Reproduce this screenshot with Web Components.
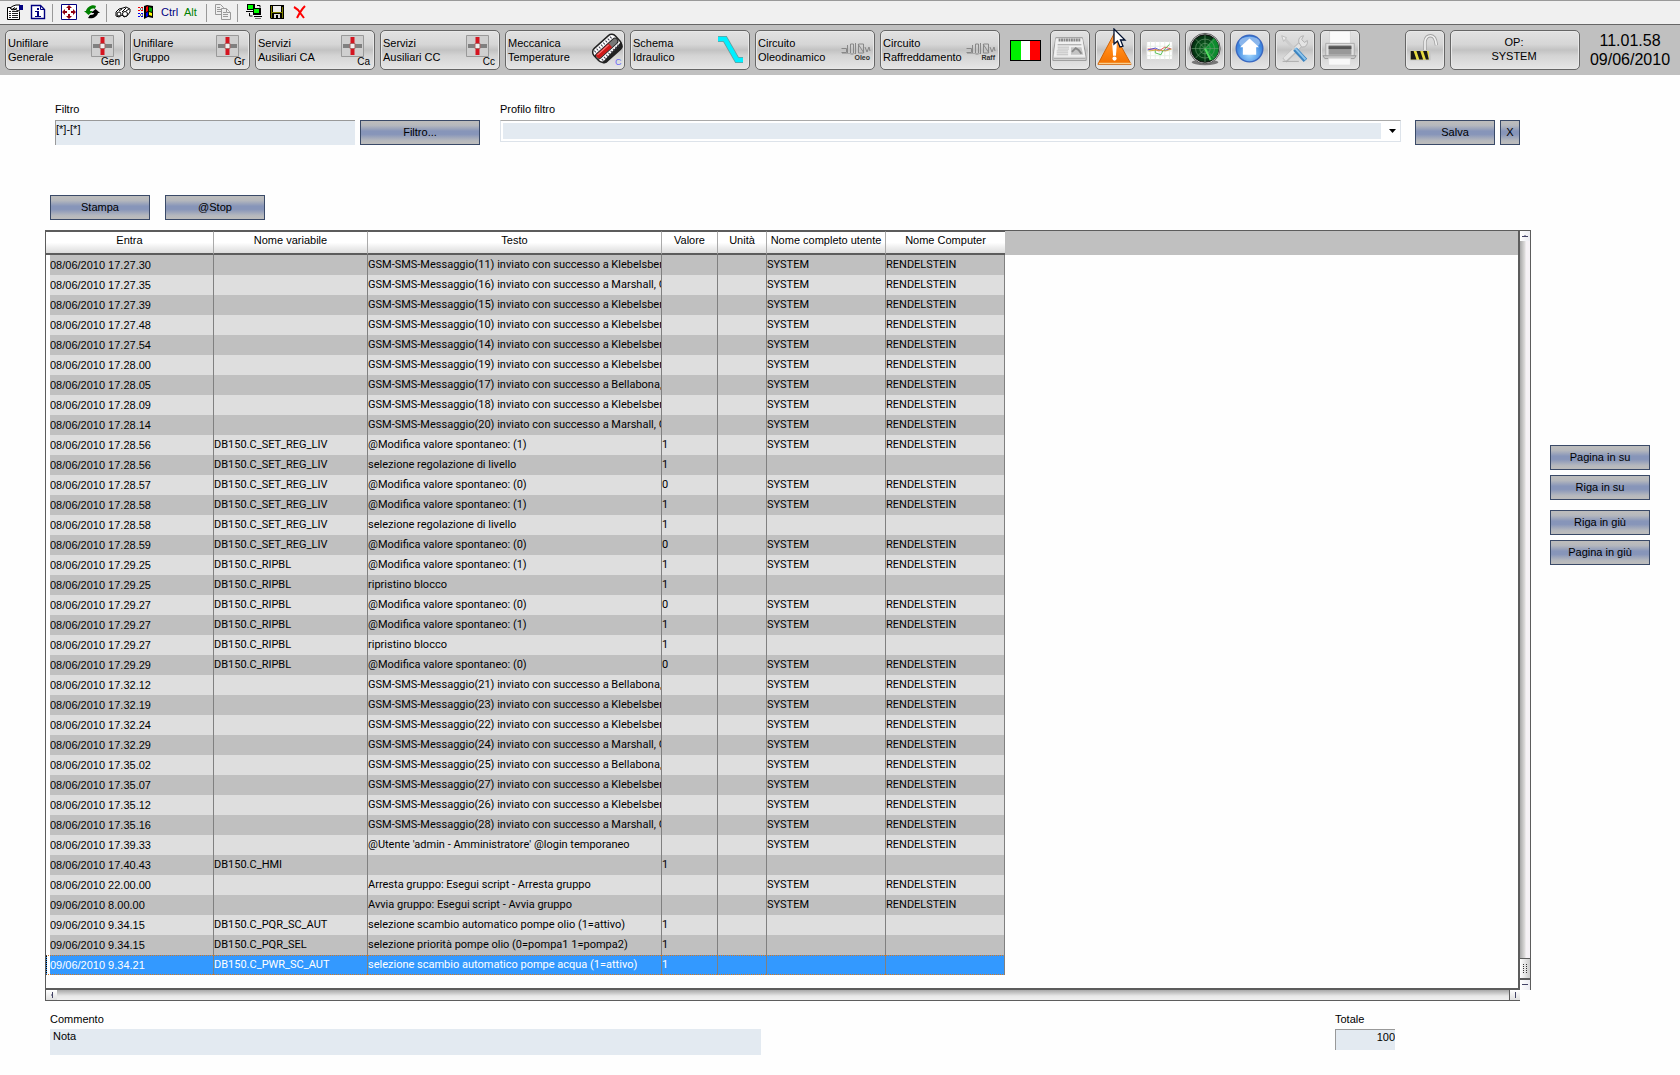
<!DOCTYPE html>
<html lang="it">
<head>
<meta charset="utf-8">
<title>Lista eventi</title>
<style>
  body { margin: 0; background: #fefefe; color: #000; font: 11px/14px "Liberation Sans", Arial, sans-serif; }
</style>
</head>
<body>
<hmi-app></hmi-app>

<script>
const NS_ICONS = {
  properties: ['0 0 16 16', '<path d="M3.500 3.500h-3v12h12v-8M3 3.500h3M0 6.500h3" fill="none" stroke="#000"/><path d="M1 5h11v10H1z" fill="#fff"/><path d="M2 7.500h2m1 0h6M2 9.500h2m1 0h6M2 11.500h2m1 0h6M2 13.500h2m1 0h6M4 5.500h6" stroke="#222"/><path d="M3 4l3-2 3-1 4 0v5l-2 1-3-2-2 1z" fill="#fff" stroke="#000"/><path d="M12 1h4v5h-4z" fill="#000080"/><path d="M5 5.500l3-2M7 6l3-2" stroke="#000"/>'],
  info: ['0 0 16 16', '<path d="M1.500 1.500h9l4 4v9h-13z" fill="#fff" stroke="#000080" stroke-width="1.400"/><path d="M10.500 1.500v4h4" fill="none" stroke="#000080"/><path d="M7 4h2v2H7zM5 7h4v5h2v1H5v-1h2V8H5z" fill="#000080"/>'],
  expand: ['0 0 16 16', '<path d="M.5 .5h15v15H.5z" fill="#fff" stroke="#000080"/><path d="M8 1l3 3H9v2H7V4H5zM8 15l3-3H9v-2H7v2H5zM1 8l3-3v2h2v2H4v2zM15 8l-3-3v2h-2v2h2v2z" fill="#900010"/>'],
  refresh: ['0 0 16 16', '<path d="M0 7h2C3 3 8 0 12 2l-1 3C8 4 6 5 6 7h3l-4.500 4z" fill="#008000"/><path d="M16 9h-2c-1 4-5 6-10 5l2-3c3 0 4-1 4-2H7l4.500-4z" fill="#000"/>'],
  find: ['0 0 16 16', '<path d="M1 8l3-3 4-1 3-1 4 2v3l-3 4-3 1-2-2-3 2-3-1z" fill="#fff" stroke="#000"/><circle cx="4" cy="10" r="2" fill="#fff" stroke="#000"/><circle cx="10" cy="10" r="2.500" fill="#fff" stroke="#000"/><path d="M4 7l3-2M7 8l4-4M11 7l3-2" stroke="#000"/>'],
  windows: ['0 0 16 16', '<path d="M6 2l3-1 6 1v12l-5-1-4 2z" fill="#000"/><path d="M8 3l2-1v5l-2 1z" fill="#f00"/><path d="M11 3l3 1v4l-3-1z" fill="#0a0"/><path d="M8 9l2-1v4l-2 1z" fill="#00f"/><path d="M11 8l3 1v3l-3-1z" fill="#ff0"/><path d="M0 3.500h5M0 6.500h5" stroke="#e00" stroke-dasharray="2 1"/><path d="M0 9.500h5M0 12.500h5" stroke="#00e" stroke-dasharray="2 1"/><path d="M2 5h3M2 11h3" stroke="#000" stroke-dasharray="1 1"/>'],
  copy: ['0 0 16 16', '<g fill="#eee" stroke="#999"><path d="M.5 .5h5l3 3v7h-8z"/><path d="M6.500 4.500h5l4 4v7h-9z"/><path d="M2 3.500h3M2 5.500h4M2 7.500h4M8 8.500h3M8 10.500h5M8 12.500h5M11.500 5v3.500h4"/></g>'],
  network: ['0 0 16 16', '<path d="M1 0h8v6H1z" fill="#000"/><path d="M2 1h5v4H2z" fill="#0f0"/><path d="M0 7.500h8" stroke="#000"/><path d="M7 4h8v7H7z" fill="#000"/><path d="M8 5h5v4H8z" fill="#0f0"/><path d="M8 12.500h8M11 1.500h3v2M3.500 9v3h3" stroke="#000" fill="none"/><path d="M9 14.500h6" stroke="#777"/>'],
  save: ['0 0 16 16', '<path d="M1 1h14v14H2l-1-1z" fill="#000"/><path d="M2 2h1v12H2zM13 3h1v11h-1z" fill="#808000"/><path d="M3 8h10v1H3z" fill="#808000"/><path d="M4 2h8v6H4z" fill="#eee"/><path d="M5 10h6v4H9v-3H7v3H5z" fill="#ddd"/>'],
  remove: ['0 0 16 16', '<path d="M2 3q4 2 7 7l3 4M13 2Q9 6 5 14" fill="none" stroke="#f00" stroke-width="2"/>'],

  temperature: ['0 0 32 36', '<g transform="rotate(-42 16 17)"><rect x="2" y="8" width="29" height="17" rx="5" fill="#fff" stroke="#222" stroke-width="1.500"/><path d="M3 24q2 4 6 3h17q5 0 5-6" fill="#222"/><path d="M5 11h23M5 22h23" stroke="#445" stroke-width="2.500" stroke-dasharray="1 2"/><rect x="2" y="13.500" width="28" height="6" rx="3" fill="#777" stroke="#222"/><path d="M4 14h17v5H4q-2-2.500 0-5z" fill="#d01818"/><path d="M5 15h15" stroke="#ff8080"/></g><text x="24" y="33" font-size="9" fill="#6868f8">C</text>'],
  pipe: ['0 0 32 36', '<path d="M2 7h7l12 21h6" fill="none" stroke="#6a9a9a" stroke-width="6"/><path d="M2 7h7l12 21h6" fill="none" stroke="#00f0ff" stroke-width="4.500"/>'],
  alert: ['0 0 40 40', '<defs><linearGradient id="a" x2="0" y2="1"><stop stop-color="#ffa050"/><stop offset=".6" stop-color="#ff8410"/><stop offset="1" stop-color="#f07000"/></linearGradient></defs><path d="M19 3L37 35H2z" fill="url(#a)" stroke="#d06000" stroke-linejoin="round"/><path d="M3 34h34" stroke="#fff0c0"/><path d="M17 13h5l-1 13h-3z" fill="#fff"/><circle cx="19.500" cy="29" r="2.200" fill="#fff"/>'],
  news: ['0 0 40 40', '<path d="M5 7l28 0 4 20v4H2v-4z" fill="#d4d4d4" stroke="#999"/><path d="M5 8h28l3 19H3z" fill="#f0f0f0"/><path d="M8 9.500h23" stroke="#888" stroke-width="3" stroke-dasharray="2 .6"/><path d="M7 14.500h25" stroke="#999"/><path d="M7 17h12M7 19h12M6 21h12M6 23h12M6 25h12" stroke="#bbb"/><path d="M21 17h11l2 8H21z" fill="#c4c4c4"/><path d="M22 22l4-4 3 2 3 4" fill="none" stroke="#888" stroke-width="2"/><path d="M3 29h33" stroke="#aaa"/>'],
  trend: ['0 0 40 40', '<path d="M6 11h27v19H6z" fill="#fff" stroke="#d8d8d8"/><path d="M10 11v19M15 11v19M20 11v19M25 11v19M30 11v19M6 16h27M6 21h27M6 26h27" stroke="#e6eee6"/><path d="M7 19l7 0 5 2 6-4 7 2" fill="none" stroke="#e05050"/><path d="M7 20l8-2 7 3 9-2" fill="none" stroke="#5050d0"/><path d="M15 20l0 3 6 2 2-4 7-7" fill="none" stroke="#50c050"/><path d="M8 21l9-1 9 1 6-2" fill="none" stroke="#d0b040"/>'],
  radar: ['0 0 40 40', '<defs><radialGradient id="r"><stop stop-color="#0a6a20"/><stop offset="1" stop-color="#042c10"/></radialGradient></defs><ellipse cx="20" cy="33" rx="14" ry="3" fill="#777"/><circle cx="20" cy="18.500" r="16" fill="#d8d8d8" stroke="#555"/><circle cx="20" cy="18.500" r="14.500" fill="url(#r)" stroke="#111"/><path d="M20 18.500L29 7A14.500 14.500 0 0 1 27 31z" fill="#10a838" opacity=".75"/><g fill="none" stroke="#6a9a70" stroke-width=".7"><circle cx="20" cy="18.500" r="10"/><circle cx="20" cy="18.500" r="5.500"/><path d="M20 4v29M6 18.500h28M10 8.500l20 20M30 8.500l-20 20"/></g><path d="M20 18.500l6 12" stroke="#50e060" stroke-width="2"/>'],
  home: ['0 0 40 40', '<defs><radialGradient id="h" cy=".7"><stop stop-color="#a8dcff"/><stop offset="1" stop-color="#3c86e0"/></radialGradient></defs><circle cx="19.500" cy="18.500" r="14" fill="url(#h)" stroke="#3a68c0" stroke-width="1.500"/><ellipse cx="19.500" cy="12" rx="11" ry="6" fill="#fff" opacity=".4"/><path d="M19.500 8l10 9h-3v8h-14v-8h-3z" fill="#fff"/>'],
  tools: ['0 0 40 40', '<path d="M9 31l18-18" stroke="#b8b8b8" stroke-width="6"/><path d="M9 30l18-17" stroke="#e4e4e4" stroke-width="4"/><path d="M24 12q-1-6 5-7l-2 4 3 3 3-2q1 7-6 7z" fill="#e4e4e4" stroke="#b0b0b0"/><path d="M8 7l13 14" stroke="#ccc" stroke-width="3"/><path d="M6 5l5 2-3 4z" fill="#eee" stroke="#bbb"/><path d="M20 19l11 12" stroke="#3c84c0" stroke-width="5"/><path d="M20 18l11 12" stroke="#8cc4ec" stroke-width="2"/><path d="M7 32h17" stroke="#aaa"/>'],
  printer: ['0 0 40 40', '<path d="M9 0h22v16H9z" fill="#fafafa" stroke="#d4d4d4"/><path d="M5 13h30v14H5z" fill="#e0e0e0" stroke="#aaa"/><path d="M8 15h24v10H8z" fill="#999"/><path d="M8 16h24v3H8z" fill="#555"/><path d="M2 26h35l-2 3H4z" fill="#c8c8c8" stroke="#999"/><path d="M8 29h23v7H8z" fill="#f8f8f8" stroke="#ddd"/>'],
  unlocked: ['0 0 40 40', '<path d="M20 20V11q1-6 6-6t6 10" fill="none" stroke="#a0a0a0" stroke-width="3.500"/><path d="M20 20V11q1-6 6-6t6 10" fill="none" stroke="#f0f0f0" stroke-width="1.800"/><rect x="4" y="20" width="22" height="11" rx="1" fill="#c8c8c8"/><rect x="5" y="21" width="19" height="9" fill="#e8dc40"/><path d="M5 21h3l3 9H5zM11 21h4l3 9h-4zM18 21h4l2 9h-3z" fill="#181818"/>'],
  pointer: ['0 0 14 20', '<path d="M1 1v15l3.500-3 2.500 6 3-1-2.500-6H12z" fill="#fff" stroke="#001030" stroke-width="1.300"/>']
};
const breakerIcon = label => ['0 0 32 36', `<path d="M.5 3.500h22v21H.5z" fill="#cfcfcf" stroke="#999"/><path d="M2 14h19" stroke="#808080" stroke-width="4"/><path d="M11.500 5v18" stroke="#d41420" stroke-width="4"/><path d="M9 11.500h5v5H9z" fill="#eee" stroke="#a66"/><text x="29" y="33" font-size="10" text-anchor="end">${label}</text>`];
const pumpIcon = label => ['0 0 32 36', `<g fill="none" stroke="#888"><path d="M.5 16.500h5v4h-5M6.500 13v9M9.500 12v10h3V12zM14.500 11v11M17.500 12v9h5v-9zM17 12l6 9M24 15l2 5 2-5 1 4"/><path d="M1 21.500h13" stroke="#aaa"/></g><text x="29" y="28" font-size="7" font-weight="bold" text-anchor="end" fill="#333">${label}</text>`];
for (const n of ['Gen', 'Gr', 'Ca', 'Cc']) NS_ICONS[n] = breakerIcon(n);
for (const n of ['Oleo', 'Raff']) NS_ICONS[n] = pumpIcon(n);

/* Base class: renders the subclass's css and html into an open shadow root. */
class HmiElement extends HTMLElement {
  connectedCallback() {
    if (this.shadowRoot) return;
    const t = document.createElement('template');
    t.innerHTML = `<style>*{box-sizing:border-box}button,input,select,textarea{font:inherit;color:inherit;margin:0;border-radius:0}${this.css()}</style>${this.html()}`;
    this.attachShadow({ mode: 'open' }).append(t.content.cloneNode(true));
  }
  attr(n, d = '') { return this.getAttribute(n) ?? d; }
}

class HmiIcon extends HmiElement {
  css() { return ':host{display:block;flex:none}svg{display:block;width:100%;height:100%;font-family:"Liberation Sans",Arial,sans-serif}'; }
  html() { const [box, body] = NS_ICONS[this.attr('name')]; return `<svg viewBox="${box}" aria-hidden="true">${body}</svg>`; }
}
customElements.define('hmi-icon', HmiIcon);

class HmiButton extends HmiElement {
  css() { return `:host{display:block;width:100px;height:25px}
    button{display:block;width:100%;height:100%;padding:0 0 2px;border:1px solid #3a4a68;
    background:linear-gradient(#bcbcbc 5%,#b4b7bd 20%,#8795b9 44%,#8795b9 58%,#b4b7bd 84%,#bcbcbc 95%);text-align:center}`; }
  html() { return '<button type="button"><slot></slot></button>'; }
}
customElements.define('hmi-button', HmiButton);

const METAL = 'border:1px solid #666;border-radius:5px;background:linear-gradient(#e2e2e2,#d6d6d6 35%,#c2c2c2 50%,#d4d4d4 65%,#e6e6e6);box-shadow:inset 0 0 0 1px #e8e8e8;';

class HmiNavButton extends HmiElement {
  css() { return `:host{display:block;width:120px;height:40px}
    button{${METAL}display:flex;justify-content:space-between;align-items:center;width:100%;height:100%;padding:0 1px 0 2px;text-align:left;line-height:14px}
    span{white-space:pre-line;flex:1;width:0}hmi-icon{width:32px;height:36px}`; }
  html() { return `<button type="button"><span>${this.attr('label').replace('|', '\n')}</span><hmi-icon name="${this.attr('icon')}"></hmi-icon></button>`; }
}
customElements.define('hmi-nav-button', HmiNavButton);

class HmiIconButton extends HmiElement {
  css() { return `:host{display:block;width:40px;height:40px;position:relative}
    button{${METAL}display:block;width:100%;height:100%;padding:0}
    hmi-icon{width:38px;height:38px}`; }
  html() { return `<button type="button" aria-label="${this.attr('label')}"><hmi-icon name="${this.attr('icon')}"></hmi-icon></button><slot></slot>`; }
}
customElements.define('hmi-icon-button', HmiIconButton);

class HmiToolbar extends HmiElement {
  css() { return `:host{display:flex;align-items:center;height:25px;padding-left:3px;background:#f0f0f0;border-top:1px solid #999;border-bottom:1px solid #666}
    button{display:block;width:23px;height:22px;padding:0 3px 1px 4px;border:0;background:none;white-space:nowrap}
    button.t{text-align:left;padding-right:0}
    hmi-icon{width:16px;height:16px}
    i{width:1px;height:18px;margin:0 4px 0 3px;background:#999}
    .c{color:#000080}.a{color:#008000}`; }
  html() {
    const b = (n, l) => `<button type="button" aria-label="${l}"><hmi-icon name="${n}"></hmi-icon></button>`;
    return b('properties', 'Proprietà') + b('info', 'Info') + '<i></i>' + b('expand', 'Espandi') + b('refresh', 'Aggiorna') + '<i></i>' +
      b('find', 'Cerca') + b('windows', 'Windows') + '<button type="button" class="t c">Ctrl</button><button type="button" class="t a">Alt</button><i></i>' +
      b('copy', 'Copia') + '<i></i>' + b('network', 'Rete') + b('save', 'Salva') + b('remove', 'Elimina');
  }
}
customElements.define('hmi-toolbar', HmiToolbar);

class HmiNavBar extends HmiElement {
  css() { return `:host{display:flex;align-items:center;gap:5px;height:50px;padding:0 5px;background:#c0c0c0}
    .flag{flex:none;width:31px;height:21px;margin:0 4px 0 5px;padding:0;border:1px solid #000;background:linear-gradient(90deg,#00f000 33%,#fff 33% 66%,#f00 66%)}
    .sp{flex:1}
    .op{${METAL}width:130px;height:40px;padding:0 2px 2px 0;line-height:14px}
    time{width:90px;text-align:center;font-size:16px;line-height:19px}
    .cur{position:absolute;left:18px;top:-2px;width:14px;height:20px}`; }
  html() {
    const nav = [['Unifilare|Generale', 'Gen'], ['Unifilare|Gruppo', 'Gr'], ['Servizi|Ausiliari CA', 'Ca'], ['Servizi|Ausiliari CC', 'Cc'], ['Meccanica|Temperature', 'temperature'], ['Schema|Idraulico', 'pipe'], ['Circuito|Oleodinamico', 'Oleo'], ['Circuito|Raffreddamento', 'Raff']]
      .map(([l, i]) => `<hmi-nav-button label="${l}" icon="${i}"></hmi-nav-button>`).join('');
    const ic = [['news', 'Notizie'], ['alert', 'Allarmi'], ['trend', 'Trend'], ['radar', 'Radar'], ['home', 'Home'], ['tools', 'Strumenti'], ['printer', 'Stampante']]
      .map(([i, l]) => `<hmi-icon-button icon="${i}" label="${l}">${i === 'alert' ? '<hmi-icon class="cur" name="pointer"></hmi-icon>' : ''}</hmi-icon-button>`).join('');
    return nav + '<button type="button" class="flag" aria-label="Italiano"></button>' + ic +
      '<span class="sp"></span><hmi-icon-button icon="unlocked" label="Accesso"></hmi-icon-button><button type="button" class="op">OP:<br>SYSTEM</button><time>11.01.58<br>09/06/2010</time>';
  }
}
customElements.define('hmi-nav-bar', HmiNavBar);

class HmiField extends HmiElement {
  css() { return `:host{display:flex;flex-direction:column;gap:3px}
    label{line-height:13px}
    input,textarea{display:block;width:100%;height:var(--h,25px);padding:0;border:0;background:#e3eaf1;resize:none;outline:0;overflow:hidden}
    .inset{border-top:1px solid #999;border-left:1px solid #999}
    .top{padding:0 0 9px}
    .num{text-align:right;padding-bottom:6px}
    textarea{padding:0 3px;line-height:14px}
    .sel{display:grid;align-items:center;border:1px solid #dde3ea;border-top-color:#aaa;height:22px;background:#fff;padding:2px 0 2px 2px}
    select{grid-area:1/1;appearance:none;width:100%;height:16px;border:0;padding:0;border-right:19px solid #fff;background:#e3eaf1;background-clip:padding-box}
    .sel svg{grid-area:1/1;justify-self:end;margin-right:4px;pointer-events:none}`; }
  html() {
    const k = this.attr('kind'), v = this.attr('value');
    const c = k === 'select' ? '<div class="sel"><select id="f"></select><svg width="7" height="4"><path d="M0 0h7L3.500 4z"/></svg></div>'
      : k === 'note' ? `<textarea id="f">${v}</textarea>`
      : `<input id="f" type="text" class="inset ${k}" value="${v}">`;
    return `<label for="f">${this.attr('label')}</label>${c}`;
  }
}
customElements.define('hmi-field', HmiField);

const SMS = (t, n, who) => [t, '', `GSM-SMS-Messaggio(${n}) inviato con successo a ${who}`, '', '', 'SYSTEM', 'RENDELSTEIN'];
const MOD = (t, v, n) => [t, v, `@Modifica valore spontaneo: (${n})`, n, '', 'SYSTEM', 'RENDELSTEIN'];
const ACT = (t, v, x) => [t, v, x, '1', '', '', ''];
const K = 'Klebelsber', M = 'Marshall, G', B = 'Bellabona,', D = '08/06/2010 ', L = 'DB150.C_SET_REG_LIV', R = 'DB150.C_RIPBL';
const EVENTS = [
  SMS(D + '17.27.30', 11, K), SMS(D + '17.27.35', 16, M), SMS(D + '17.27.39', 15, K), SMS(D + '17.27.48', 10, K),
  SMS(D + '17.27.54', 14, K), SMS(D + '17.28.00', 19, K), SMS(D + '17.28.05', 17, B), SMS(D + '17.28.09', 18, K), SMS(D + '17.28.14', 20, M),
  MOD(D + '17.28.56', L, 1), ACT(D + '17.28.56', L, 'selezione regolazione di livello'),
  MOD(D + '17.28.57', L, 0), MOD(D + '17.28.58', L, 1), ACT(D + '17.28.58', L, 'selezione regolazione di livello'), MOD(D + '17.28.59', L, 0),
  MOD(D + '17.29.25', R, 1), ACT(D + '17.29.25', R, 'ripristino blocco'), MOD(D + '17.29.27', R, 0), MOD(D + '17.29.27', R, 1),
  ACT(D + '17.29.27', R, 'ripristino blocco'), MOD(D + '17.29.29', R, 0),
  SMS(D + '17.32.12', 21, B), SMS(D + '17.32.19', 23, K), SMS(D + '17.32.24', 22, K), SMS(D + '17.32.29', 24, M),
  SMS(D + '17.35.02', 25, B), SMS(D + '17.35.07', 27, K), SMS(D + '17.35.12', 26, K), SMS(D + '17.35.16', 28, M),
  [D + '17.39.33', '', "@Utente 'admin - Amministratore' @login temporaneo", '', '', 'SYSTEM', 'RENDELSTEIN'],
  [D + '17.40.43', 'DB150.C_HMI', '', '1', '', '', ''],
  [D + '22.00.00', '', 'Arresta gruppo: Esegui script - Arresta gruppo', '', '', 'SYSTEM', 'RENDELSTEIN'],
  ['09/06/2010 8.00.00', '', 'Avvia gruppo: Esegui script - Avvia gruppo', '', '', 'SYSTEM', 'RENDELSTEIN'],
  ACT('09/06/2010 9.34.15', 'DB150.C_PQR_SC_AUT', 'selezione scambio automatico pompe olio (1=attivo)'),
  ACT('09/06/2010 9.34.15', 'DB150.C_PQR_SEL', 'selezione priorità pompe olio (0=pompa1 1=pompa2)'),
  ACT('09/06/2010 9.34.21', 'DB150.C_PWR_SC_AUT', 'selezione scambio automatico pompe acqua (1=attivo)')
];

class HmiEventTable extends HmiElement {
  css() { return `:host{display:grid;grid-template-columns:1fr 11px;grid-template-rows:1fr 11px}
    .frame{border:solid #5c5c5c;border-width:1px 2px 2px 1px;padding-bottom:13px;background:linear-gradient(#c0c0c0 24px,#fefefe 24px)}
    table{table-layout:fixed;width:959px;border-collapse:separate;border-spacing:0}
    th,td{padding:0;overflow:hidden;white-space:nowrap;text-align:left;font-weight:normal}
    th{height:24px;padding:0 0 5px;text-align:center;border-top:1px solid #5c5c5c;border-bottom:2px solid #5c5c5c;border-left:1px solid #aaa;background:linear-gradient(#fff 50%,#dcdcdc)}
    th:first-child{border-left:0}
    td{height:20px;line-height:18px;border-left:1px solid #808080;background:#c0c0c0}
    tr:nth-child(even) td{background:#dedede}
    td:first-child{border-left:4px solid #fefefe}
    td:nth-child(n+2){font-family:Roboto,sans-serif}
    td:last-child{border-right:1px solid #808080}
    tr.on td{color:#fff;background:#3399ff;border-top:1px dotted #d87820;border-bottom:1px dotted #d87820;line-height:16px}
    tr.on td:first-child{border-left:1px dotted #000;padding-left:3px;background:linear-gradient(90deg,#fefefe 3px,#3399ff 3px)}
    .v{display:flex;flex-direction:column;border-top:1px solid #5c5c5c;border-right:1px solid #5c5c5c;background:linear-gradient(90deg,#a8a8a8,#e0dede 50%,#f6f2f6 60%)}
    .h{display:flex;border-left:1px solid #5c5c5c;border-bottom:1px solid #5c5c5c;background:linear-gradient(#a8a8a8,#e8e8e8 60%,#f0f0f0)}
    .g{flex:1}
    button{display:grid;place-items:center;flex:none;width:10px;height:10px;padding:0;border:0;background:linear-gradient(90deg,#fff,#ececf2)}
    .h button{width:11px;background:linear-gradient(#fff,#e0e0e0)}
    .h .e{border-left:1px solid #5c5c5c}
    .v .th{height:22px;border-top:1px solid #5c5c5c;border-bottom:2px solid #5c5c5c;background:linear-gradient(90deg,#fff,#ccc)}
    svg{display:block}`; }
  html() {
    const heads = [['Entra', 167], ['Nome variabile', 154], ['Testo', 294], ['Valore', 56], ['Unità', 49], ['Nome completo utente', 119], ['Nome Computer', 120]];
    const tick = (n, d) => `<button type="button" aria-label="${n}"><svg width="6" height="6"><path d="${d}" stroke="#446" fill="none"/></svg></button>`;
    return `<div class="frame"><table><colgroup>${heads.map(h => `<col style="width:${h[1]}px">`).join('')}</colgroup>
      <thead><tr>${heads.map(h => `<th>${h[0]}</th>`).join('')}</tr></thead>
      <tbody>${EVENTS.map((e, i) => `<tr${i === EVENTS.length - 1 ? ' class="on"' : ''}>${e.map(c => `<td>${c}</td>`).join('')}</tr>`).join('')}</tbody></table></div>
      <div class="v">${tick('Su', 'M0 3.500h6M3 2v1')}<div class="g"></div><button type="button" class="th" aria-label="Cursore"><svg width="6" height="10"><path d="M1.500 0v10M4.500 0v10" stroke="#333" stroke-dasharray="1 1"/></svg></button>${tick('Giù', 'M0 2.500h6')}</div>
      <div class="h">${tick('Sinistra', 'M3.500 0v6M2 3h1')}<div class="g"></div>${tick('Destra', 'M3.500 0v6').replace('<button', '<button class="e"')}</div>`;
  }
}
customElements.define('hmi-event-table', HmiEventTable);

class HmiApp extends HmiElement {
  css() { return `:host{display:block}
    .filter{display:flex;align-items:flex-start;padding:28px 160px 0 55px}
    .filter hmi-button{margin-top:17px}
    .filter hmi-field{gap:4px}
    .f1{width:300px;margin-right:5px}
    .b1{width:120px;margin-right:20px}
    .f2{flex:1;margin-right:14px}
    .b2{width:80px;margin-right:5px}.b3{width:20px}
    .acts{display:flex;gap:15px;padding:50px 50px 10px}
    .body{display:flex;align-items:center;gap:19px;padding:0 30px 0 45px}
    hmi-event-table{flex:1}
    .side{display:flex;flex-direction:column;gap:5px;padding-bottom:221px}
    .side hmi-button:nth-child(3){margin-top:5px}
    .foot{display:flex;justify-content:space-between;align-items:flex-start;padding:12px 285px 16px 50px}
    .note{width:711px;--h:26px}.tot{width:60px;--h:21px}`; }
  html() { return `<header><hmi-toolbar></hmi-toolbar><hmi-nav-bar></hmi-nav-bar></header>
    <main>
      <div class="filter"><hmi-field class="f1" kind="top" label="Filtro" value="[*]-[*]"></hmi-field><hmi-button class="b1">Filtro...</hmi-button>
        <hmi-field class="f2" kind="select" label="Profilo filtro"></hmi-field><hmi-button class="b2">Salva</hmi-button><hmi-button class="b3">X</hmi-button></div>
      <div class="acts"><hmi-button>Stampa</hmi-button><hmi-button>@Stop</hmi-button></div>
      <div class="body"><hmi-event-table></hmi-event-table>
        <div class="side"><hmi-button>Pagina in su</hmi-button><hmi-button>Riga in su</hmi-button><hmi-button>Riga in giù</hmi-button><hmi-button>Pagina in giù</hmi-button></div></div>
      <div class="foot"><hmi-field class="note" kind="note" label="Commento" value="Nota"></hmi-field><hmi-field class="tot" kind="num" label="Totale" value="100"></hmi-field></div>
    </main>`; }
}
customElements.define('hmi-app', HmiApp);
</script>
</body>
</html>
